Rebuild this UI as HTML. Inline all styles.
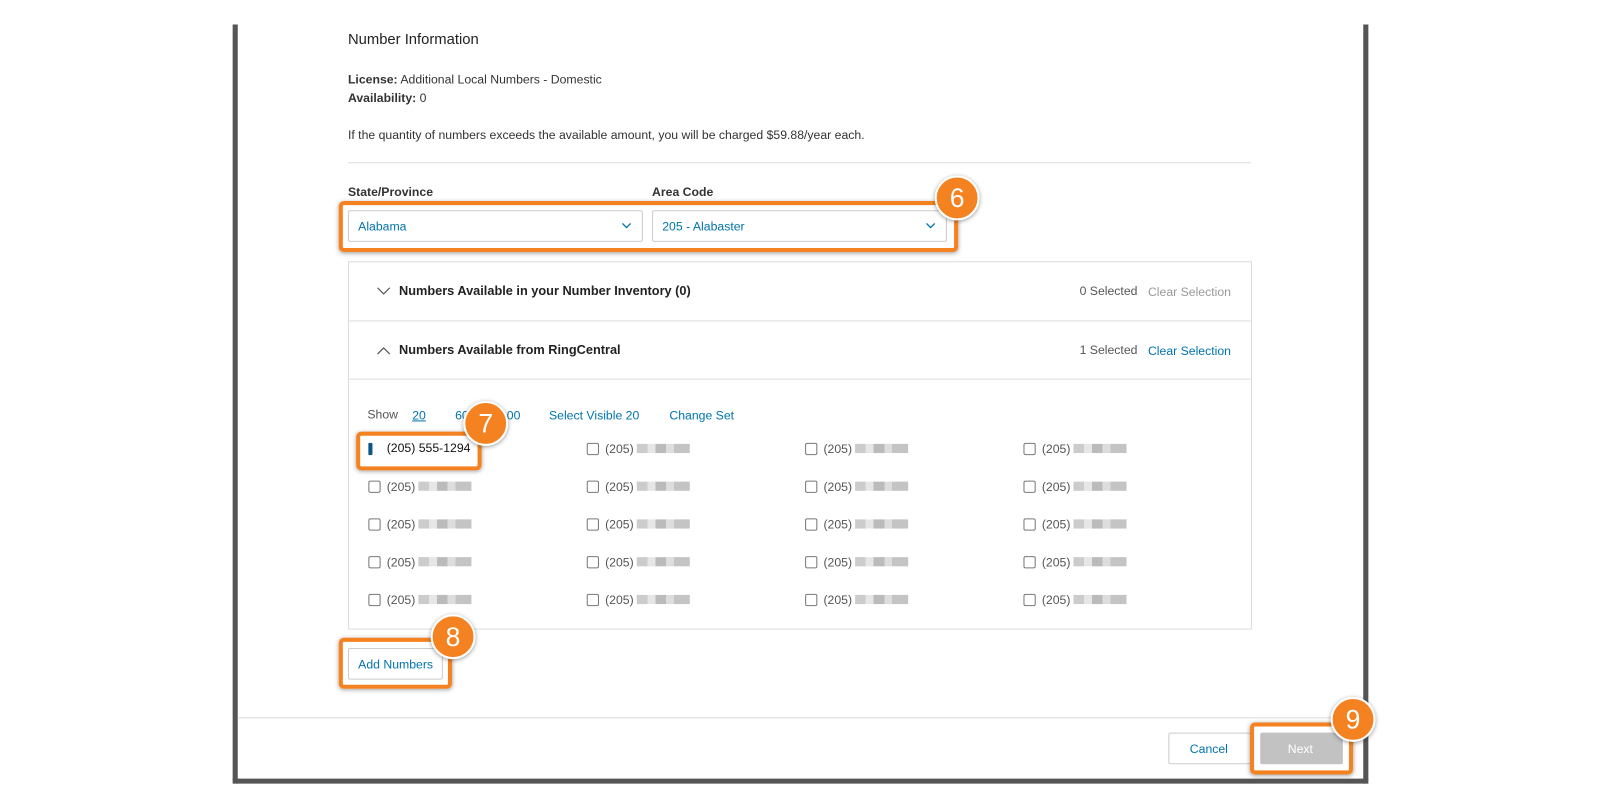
<!DOCTYPE html>
<html><head><style>
*{margin:0;padding:0;box-sizing:border-box}
body{width:1600px;height:804px;background:#fff;position:relative;overflow:hidden;font-family:"Liberation Sans",Arial,sans-serif;color:#333;font-size:12px}
#w{position:absolute;left:0;top:0;width:1568px;height:788px;transform:scale(1.0204);transform-origin:0 0}
.a{position:absolute;white-space:nowrap}
.blue{color:#0073ae}
.cb{position:absolute;width:12px;height:12px;border:1px solid #777;border-radius:2px;background:#fff}
.ph{position:absolute;color:#555;font-size:12px}
.bl{position:absolute;height:9px;width:52px;background:linear-gradient(90deg,#ccc 0 20%,#e6e6e6 20% 35%,#bbb 35% 55%,#ddd 55% 70%,#c4c4c4 70% 100%)}
.hl{position:absolute;border:4px solid #f58220;border-radius:5px;box-shadow:0 1px 4px rgba(0,0,0,.35)}
.badge{position:absolute;width:44px;height:44px;border-radius:50%;background:#f58220;border:2px solid #fff;box-shadow:0 1px 4px rgba(0,0,0,.4);color:#fff;font-size:26px;text-align:center;line-height:40px}
</style></head><body><div id="w">
<div class="a" style="left:228px;top:24px;width:5px;height:744px;background:#555"></div>
<div class="a" style="left:1336px;top:24px;width:5px;height:744px;background:#555"></div>
<div class="a" style="left:228px;top:763px;width:1113px;height:5px;background:#555;border-radius:0 0 4px 4px"></div>

<div class="a" style="left:341px;top:31px;font-size:14.5px;color:#222">Number Information</div>
<div class="a" style="left:341px;top:71px"><b>License:</b> Additional Local Numbers - Domestic</div>
<div class="a" style="left:341px;top:89px"><b>Availability:</b> 0</div>
<div class="a" style="left:341px;top:125px">If the quantity of numbers exceeds the available amount, you will be charged $59.88/year each.</div>
<div class="a" style="left:341px;top:159px;width:885px;height:1px;background:#ddd"></div>

<div class="a" style="left:341px;top:181px;font-weight:bold">State/Province</div>
<div class="a" style="left:639px;top:181px;font-weight:bold">Area Code</div>
<div class="a" style="left:341px;top:206px;width:289px;height:31px;border:1px solid #ccc;border-radius:2px"></div>
<div class="a blue" style="left:351px;top:215px">Alabama</div>
<svg class="a" style="left:609px;top:218px" width="10" height="7"><path d="M1 1l4 4 4-4" stroke="#0073ae" fill="none" stroke-width="1.3"/></svg>
<div class="a" style="left:639px;top:206px;width:289px;height:31px;border:1px solid #ccc;border-radius:2px"></div>
<div class="a blue" style="left:649px;top:215px">205 - Alabaster</div>
<svg class="a" style="left:907px;top:218px" width="10" height="7"><path d="M1 1l4 4 4-4" stroke="#0073ae" fill="none" stroke-width="1.3"/></svg>

<div class="a" style="left:341px;top:256px;width:886px;height:361px;border:1px solid #ddd"></div>
<div class="a" style="left:342px;top:314px;width:884px;height:1px;background:#ddd"></div>
<div class="a" style="left:342px;top:371px;width:884px;height:1px;background:#ddd"></div>
<svg class="a" style="left:369px;top:281px" width="14" height="9"><path d="M1 1l6 6 6-6" stroke="#555" fill="none" stroke-width="1.2"/></svg>
<div class="a" style="left:391px;top:278px;font-weight:bold;font-size:12.5px;color:#222">Numbers Available in your Number Inventory (0)</div>
<div class="a" style="left:1058px;top:278px;color:#555">0 Selected</div>
<div class="a" style="left:1125px;top:279px;color:#999">Clear Selection</div>
<svg class="a" style="left:369px;top:339px" width="14" height="9"><path d="M1 8l6-6 6 6" stroke="#555" fill="none" stroke-width="1.2"/></svg>
<div class="a" style="left:391px;top:336px;font-weight:bold;font-size:12.5px;color:#222">Numbers Available from RingCentral</div>
<div class="a" style="left:1058px;top:336px;color:#555">1 Selected</div>
<div class="a blue" style="left:1125px;top:337px">Clear Selection</div>

<div class="a" style="left:360px;top:399px;color:#555">Show</div>
<div class="a blue" style="left:404px;top:400px;text-decoration:underline">20</div>
<div class="a blue" style="left:446px;top:400px">60</div>
<div class="a blue" style="left:490px;top:400px">100</div>
<div class="a blue" style="left:538px;top:400px">Select Visible 20</div>
<div class="a blue" style="left:656px;top:400px">Change Set</div>

<div class="a" style="left:361px;top:434px;width:4px;height:12px;background:#0b5585;border-radius:1px"></div>
<div class="a" style="left:379px;top:432px;color:#111">(205) 555-1294</div>
<div id="grid"></div>

<div class="a" style="left:341px;top:635px;width:93px;height:31px;border:1px solid #ccc;border-radius:2px"></div>
<div class="a blue" style="left:351px;top:644px">Add Numbers</div>

<div class="a" style="left:233px;top:703px;width:1103px;height:1px;background:#ddd"></div>
<div class="a" style="left:1145px;top:718px;width:81px;height:31px;border:1px solid #ccc;border-radius:2px"></div>
<div class="a blue" style="left:1166px;top:727px">Cancel</div>
<div class="a" style="left:1235px;top:718px;width:81px;height:31px;background:#c2c2c2;border-radius:2px"></div>
<div class="a" style="left:1262px;top:727px;color:#fff">Next</div>

<div class="hl" style="left:332px;top:197px;width:607px;height:50px"></div>
<div class="badge" style="left:916px;top:172px">6</div>
<div class="hl" style="left:349px;top:423px;width:123px;height:38px"></div>
<div class="badge" style="left:454px;top:393px">7</div>
<div class="hl" style="left:332px;top:625px;width:111px;height:50px"></div>
<div class="badge" style="left:422px;top:602px">8</div>
<div class="hl" style="left:1225px;top:708px;width:101px;height:51px"></div>
<div class="badge" style="left:1304px;top:683px">9</div>

<script>
var g='';var xs=[361,575,789,1003],ys=[440,477,514,551,588];
for(var r=0;r<5;r++)for(var c=0;c<4;c++){if(r==0&&c==0)continue;var x=xs[c],y=ys[r];
g+='<div class="cb" style="left:'+x+'px;top:'+(y-6)+'px"></div><div class="ph" style="left:'+(x+18)+'px;top:'+(y-7)+'px">(205)</div><div class="bl" style="left:'+(x+49)+'px;top:'+(y-5)+'px"></div>';}
document.getElementById('grid').outerHTML=g;
</script>
</div></body></html>
